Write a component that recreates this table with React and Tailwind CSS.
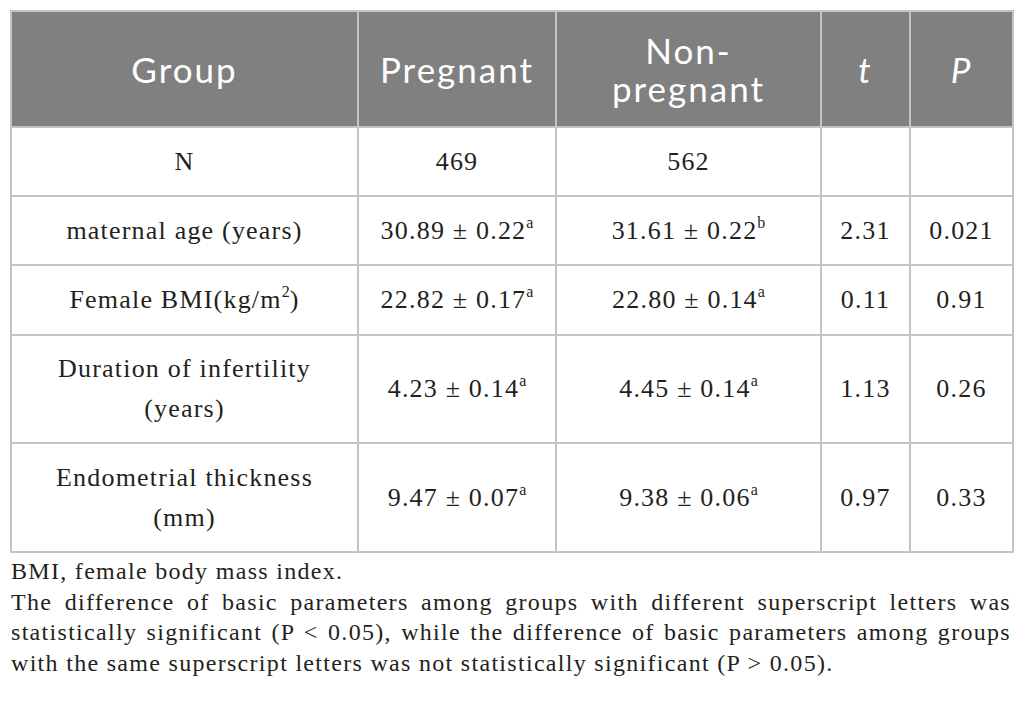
import React from "react";

const serif = { fontFamily: '"Liberation Serif", "Times New Roman", serif' };

function Sup({ children }) {
  return <sup className="text-[16px] relative -top-[11px] tracking-normal">{children}</sup>;
}

const rows = [
  { h: "h-[69px]", g: "N", p: "469", n: "562", t: "", pv: "" },
  {
    h: "h-[69px]",
    g: "maternal age (years)",
    p: <>30.89 ± 0.22<Sup>a</Sup></>,
    n: <>31.61 ± 0.22<Sup>b</Sup></>,
    t: "2.31",
    pv: "0.021",
  },
  {
    h: "h-[70px]",
    g: <>Female BMI(kg/m<Sup>2</Sup>)</>,
    p: <>22.82 ± 0.17<Sup>a</Sup></>,
    n: <>22.80 ± 0.14<Sup>a</Sup></>,
    t: "0.11",
    pv: "0.91",
  },
  {
    h: "h-[108px]",
    g: <>Duration of infertility<br />(years)</>,
    p: <>4.23 ± 0.14<Sup>a</Sup></>,
    n: <>4.45 ± 0.14<Sup>a</Sup></>,
    t: "1.13",
    pv: "0.26",
  },
  {
    h: "h-[109px]",
    g: <>Endometrial thickness<br />(mm)</>,
    p: <>9.47 ± 0.07<Sup>a</Sup></>,
    n: <>9.38 ± 0.06<Sup>a</Sup></>,
    t: "0.97",
    pv: "0.33",
  },
];

export default function App() {
  const td =
    "border-2 border-[#c4c4c4] text-center align-middle text-[26px] tracking-[1.2px] leading-[40px] text-[#231f20]";
  const th =
    "border-2 border-[#c4c4c4] bg-[#808080] text-white font-normal text-center align-middle text-[35px] tracking-[2px] leading-[38px]";
  const line = "whitespace-nowrap text-justify [text-align-last:justify]";
  return (
    <div className="w-[1026px] h-[710px] bg-white pt-[10px] px-[10px]">
      <table className="w-[1002px] table-fixed border-collapse" style={serif}>
        <colgroup>
          <col className="w-[347px]" />
          <col className="w-[198px]" />
          <col className="w-[265px]" />
          <col className="w-[89px]" />
          <col className="w-[103px]" />
        </colgroup>
        <thead>
          <tr className="h-[116px]" style={{ fontFamily: 'Lato, "Open Sans", sans-serif' }}>
            <th className={th}>Group</th>
            <th className={th}>Pregnant</th>
            <th className={th}>
              Non-
              <br />
              pregnant
            </th>
            <th className={th + " italic"}>t</th>
            <th className={th + " italic"}>P</th>
          </tr>
        </thead>
        <tbody>
          {rows.map((r, i) => (
            <tr key={i} className={r.h}>
              <td className={td}>{r.g}</td>
              <td className={td}>{r.p}</td>
              <td className={td}>{r.n}</td>
              <td className={td}>{r.t}</td>
              <td className={td}>{r.pv}</td>
            </tr>
          ))}
        </tbody>
      </table>
      <div
        className="mt-[3px] ml-[1px] w-[1000px] text-[24px] tracking-[1.3px] leading-[30.5px] text-[#231f20]"
        style={serif}
      >
        <p>BMI, female body mass index.</p>
        <p className={line}>
          The difference of basic parameters among groups with different superscript letters was
        </p>
        <p className={line}>
          statistically significant (P &lt; 0.05), while the difference of basic parameters among groups
        </p>
        <p className="whitespace-nowrap">
          with the same superscript letters was not statistically significant (P &gt; 0.05).
        </p>
      </div>
    </div>
  );
}
